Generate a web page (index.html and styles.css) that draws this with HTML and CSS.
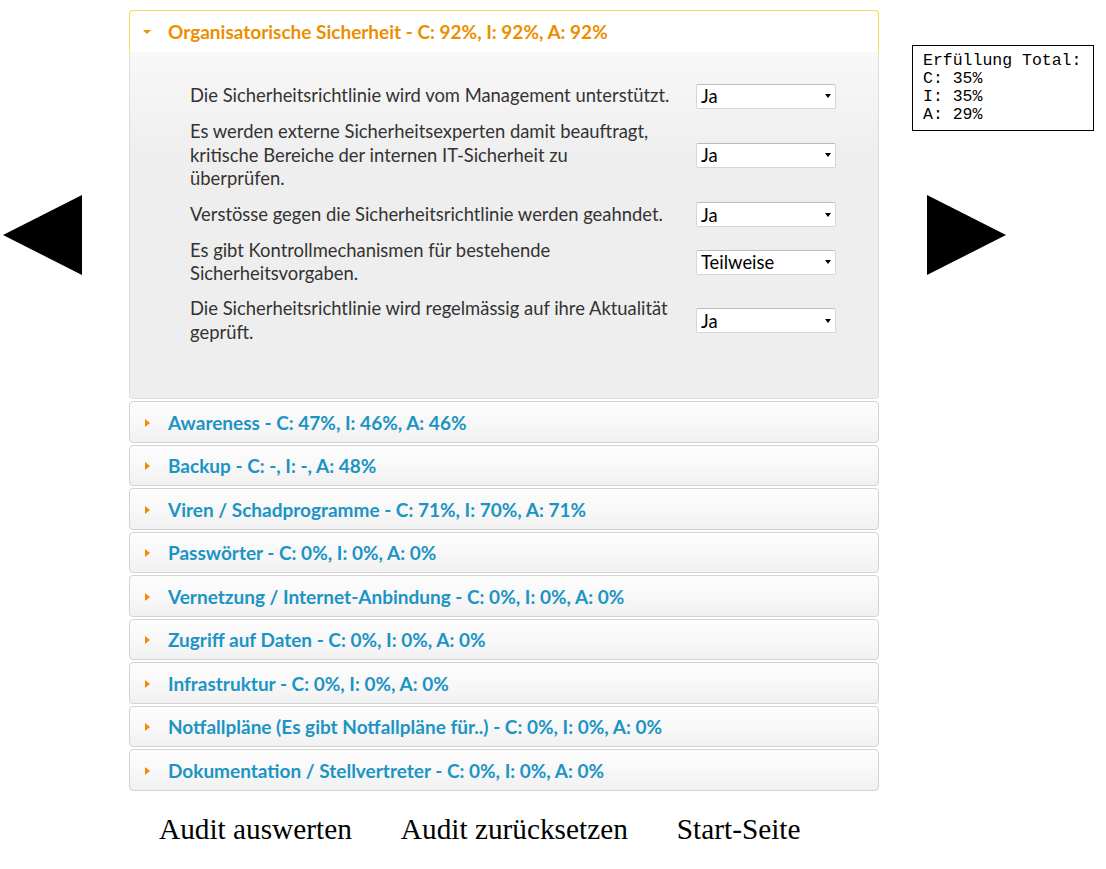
FILE: index.html
```html
<!DOCTYPE html>
<html lang="de">
<head>
<meta charset="utf-8">
<title>Audit</title>
<link rel="stylesheet" href="styles.css">
</head>
<body>
<div class="page">
  <div class="side side-left">
    <svg class="nav-arrow" width="79" height="80" viewBox="0 0 79 80"><polygon points="0,40 79,0 79,80"/></svg>
  </div>

  <div class="main">
    <div class="accordion">
      <div class="acc-header active"><span class="icon"><span class="tri-down"></span></span><span class="acc-title">Organisatorische Sicherheit - C: 92%, I: 92%, A: 92%</span></div>
      <div class="acc-content">
        <div class="questions">
          <div class="q-label">Die Sicherheitsrichtlinie wird vom Management unterstützt.</div>
          <div class="select-wrap"><select><option>Ja</option><option>Nein</option><option>Teilweise</option></select></div>

          <div class="q-label">Es werden externe Sicherheitsexperten damit beauftragt,<br>kritische Bereiche der internen IT-Sicherheit zu<br>überprüfen.</div>
          <div class="select-wrap"><select><option>Ja</option><option>Nein</option><option>Teilweise</option></select></div>

          <div class="q-label">Verstösse gegen die Sicherheitsrichtlinie werden geahndet.</div>
          <div class="select-wrap"><select><option>Ja</option><option>Nein</option><option>Teilweise</option></select></div>

          <div class="q-label">Es gibt Kontrollmechanismen für bestehende<br>Sicherheitsvorgaben.</div>
          <div class="select-wrap"><select><option>Teilweise</option><option>Ja</option><option>Nein</option></select></div>

          <div class="q-label">Die Sicherheitsrichtlinie wird regelmässig auf ihre Aktualität<br>geprüft.</div>
          <div class="select-wrap"><select><option>Ja</option><option>Nein</option><option>Teilweise</option></select></div>
        </div>
      </div>

      <div class="acc-header"><span class="icon"><span class="tri-right"></span></span><span class="acc-title">Awareness - C: 47%, I: 46%, A: 46%</span></div>
      <div class="acc-header"><span class="icon"><span class="tri-right"></span></span><span class="acc-title">Backup - C: -, I: -, A: 48%</span></div>
      <div class="acc-header"><span class="icon"><span class="tri-right"></span></span><span class="acc-title">Viren / Schadprogramme - C: 71%, I: 70%, A: 71%</span></div>
      <div class="acc-header"><span class="icon"><span class="tri-right"></span></span><span class="acc-title">Passwörter - C: 0%, I: 0%, A: 0%</span></div>
      <div class="acc-header"><span class="icon"><span class="tri-right"></span></span><span class="acc-title">Vernetzung / Internet-Anbindung - C: 0%, I: 0%, A: 0%</span></div>
      <div class="acc-header"><span class="icon"><span class="tri-right"></span></span><span class="acc-title">Zugriff auf Daten - C: 0%, I: 0%, A: 0%</span></div>
      <div class="acc-header"><span class="icon"><span class="tri-right"></span></span><span class="acc-title">Infrastruktur - C: 0%, I: 0%, A: 0%</span></div>
      <div class="acc-header"><span class="icon"><span class="tri-right"></span></span><span class="acc-title">Notfallpläne (Es gibt Notfallpläne für..) - C: 0%, I: 0%, A: 0%</span></div>
      <div class="acc-header"><span class="icon"><span class="tri-right"></span></span><span class="acc-title">Dokumentation / Stellvertreter - C: 0%, I: 0%, A: 0%</span></div>
    </div>

    <div class="actions">
      <a class="action" href="#">Audit auswerten</a>
      <a class="action" href="#">Audit zurücksetzen</a>
      <a class="action" href="#">Start-Seite</a>
    </div>
  </div>

  <div class="side side-right">
    <pre class="summary">Erfüllung Total:
C: 35%
I: 35%
A: 29%</pre>
    <svg class="nav-arrow nav-right" width="79" height="80" viewBox="0 0 79 80"><polygon points="0,0 79,40 0,80"/></svg>
  </div>
</div>
</body>
</html>
```

FILE: styles.css
```css
html, body {
  margin: 0;
  padding: 0;
  background: #ffffff;
}

.page {
  display: flex;
  align-items: flex-start;
  padding: 8px 0 0 3px;
  font-family: Lato, "DejaVu Sans", sans-serif;
}

.side {
  display: flex;
  flex-direction: column;
  align-items: flex-start;
}

.side-left {
  width: 79px;
}

.side-left .nav-arrow {
  margin-top: 187px;
}

.nav-arrow {
  display: block;
  fill: #000;
}

.main {
  margin-left: 47px;
  width: 750px;
}

.accordion {
  width: 750px;
}

.acc-header {
  display: flex;
  align-items: center;
  margin-top: 2px;
  padding: 10.5px 8px 9px 8.5px;
  line-height: 20px;
  height: 20px;
  border: 1px solid #d3d3d3;
  border-radius: 4px;
  background: linear-gradient(#fdfdfd 0%, #f8f8f8 50%, #f1f1f1 100%);
  color: #1c94c4;
  font-size: 19px;
  font-weight: bold;
  white-space: nowrap;
}

.acc-header.active {
  background: #ffffff;
  border-color: #fbd850;
  border-bottom-color: #ffffff;
  border-radius: 4px 4px 0 0;
  color: #eb8f00;
}

.icon {
  width: 16px;
  height: 16px;
  display: flex;
  align-items: center;
  justify-content: center;
  margin-right: 13.5px;
  flex: none;
}

.tri-right {
  width: 0;
  height: 0;
  border-left: 5px solid #ef8c08;
  border-top: 4px solid transparent;
  border-bottom: 4px solid transparent;
  margin-left: 1px;
}

.tri-down {
  width: 0;
  height: 0;
  border-top: 4px solid #ef8c08;
  border-left: 4px solid transparent;
  border-right: 4px solid transparent;
}

.acc-content {
  border: 1px solid #dddddd;
  border-top: none;
  border-radius: 0 0 4px 4px;
  background: linear-gradient(#f8f8f8 0%, #eeeeee 110px, #eeeeee 100%);
  padding: 32px 42px 54px 60px;
  color: #333333;
}

.questions {
  display: grid;
  grid-template-columns: 490px 140px;
  column-gap: 16px;
  row-gap: 11.5px;
  align-items: center;
}

.q-label {
  font-size: 18.4px;
  line-height: 23.5px;
  white-space: nowrap;
}

.select-wrap {
  position: relative;
  width: 140px;
  height: 25px;
}

.select-wrap select {
  -webkit-appearance: none;
  appearance: none;
  box-sizing: border-box;
  width: 140px;
  height: 25px;
  margin: 0;
  padding: 0 0 0 4px;
  border: 1px solid #d6d6d6;
  border-top-color: #bcbcbc;
  border-radius: 2px;
  background: #ffffff;
  color: #000000;
  font-family: Lato, "DejaVu Sans", sans-serif;
  font-size: 18.4px;
  outline: none;
}

.select-wrap::after {
  content: "";
  position: absolute;
  right: 5px;
  top: 10.5px;
  width: 0;
  height: 0;
  border-top: 4px solid #000;
  border-left: 3.5px solid transparent;
  border-right: 3.5px solid transparent;
  pointer-events: none;
}

.actions {
  display: flex;
  gap: 49px;
  margin-top: 22px;
  padding-left: 30px;
}

.action {
  font-family: "Liberation Serif", "Times New Roman", serif;
  font-size: 29.3px;
  color: #000000;
  text-decoration: none;
}

.side-right {
  margin-left: 33px;
}

.summary {
  box-sizing: border-box;
  width: 182px;
  margin: 37px 0 0 0;
  padding: 6px 10px 6px 10px;
  border: 1px solid #000;
  font-family: "Liberation Mono", "Courier New", monospace;
  font-size: 16.5px;
  line-height: 18px;
  color: #000;
}

.nav-right {
  margin-top: 64px;
  margin-left: 15px;
}
```
